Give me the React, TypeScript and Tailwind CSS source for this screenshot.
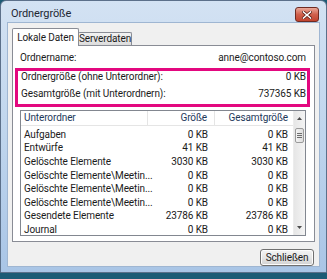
import React from 'react';

const rows = [
  { name: 'Aufgaben', size: '0 KB', total: '0 KB' },
  { name: 'Entwürfe', size: '41 KB', total: '41 KB' },
  { name: 'Gelöschte Elemente', size: '3030 KB', total: '3030 KB' },
  { name: 'Gelöschte Elemente\\Meetin...', size: '0 KB', total: '0 KB' },
  { name: 'Gelöschte Elemente\\Meetin...', size: '0 KB', total: '0 KB' },
  { name: 'Gelöschte Elemente\\Meetin...', size: '0 KB', total: '0 KB' },
  { name: 'Gesendete Elemente', size: '23786 KB', total: '23786 KB' },
  { name: 'Journal', size: '0 KB', total: '0 KB' },
];

const CloseButton = () => (
  <div className="mt-[6px] mr-[1px] w-[24px] h-[15px] rounded-[3px] border border-[#6e2b22] bg-gradient-to-b from-[#e9a899] via-[#d0604c] to-[#c2432e] flex items-center justify-center">
    <svg width="10" height="8" viewBox="0 0 10 8">
      <path d="M1.5 1 L8.5 7 M8.5 1 L1.5 7" stroke="#5a1d14" strokeWidth="3" strokeLinecap="square" />
      <path d="M1.5 1 L8.5 7 M8.5 1 L1.5 7" stroke="#ffffff" strokeWidth="1.6" strokeLinecap="square" />
    </svg>
  </div>
);

const Scrollbar = () => (
  <div className="w-[12px] flex flex-col bg-gradient-to-r from-[#e6e6e6] to-[#f4f4f4] border-l border-[#ececec]">
    <div className="h-[15px] flex items-center justify-center">
      <svg width="5" height="3" viewBox="0 0 5 3"><path d="M0 3 L2.5 0 L5 3 Z" fill="#4d4d4d" /></svg>
    </div>
    <div className="mt-[2px] mx-[1px] h-[15px] rounded-[2px] border border-[#9a9a9a] bg-gradient-to-r from-[#f3f3f3] to-[#dedede] flex flex-col items-center justify-center gap-[1px]">
      <div className="w-[5px] h-[1px] bg-[#6d6d6d]" />
      <div className="w-[5px] h-[1px] bg-[#6d6d6d]" />
      <div className="w-[5px] h-[1px] bg-[#6d6d6d]" />
    </div>
    <div className="flex-1" />
    <div className="h-[15px] flex items-center justify-center">
      <svg width="5" height="3" viewBox="0 0 5 3"><path d="M0 0 L5 0 L2.5 3 Z" fill="#4d4d4d" /></svg>
    </div>
  </div>
);

export default function App() {
  return (
    <div className="w-[327px] h-[279px] overflow-hidden bg-[#1c5b75] font-['Roboto',sans-serif] text-[10px] tracking-[-0.1px] text-[#1b1b1b]">
      <div className="h-[273px] flex flex-col border border-[#5c708a] rounded-t-[6px] bg-gradient-to-b from-[#d3e2f3] via-[#bfd5ed] to-[#a9c5e6] px-[6px] pb-[5px]">
        {/* title bar */}
        <div className="h-[21px] shrink-0 flex items-start justify-between">
          <span className="mt-[5px] ml-[4px] text-[11px] leading-[15px] text-[#1e2733]">Ordnergröße</span>
          <CloseButton />
        </div>

        {/* client area */}
        <div className="h-[245px] flex flex-col bg-[#f0f0f0] border border-[#9fb6d2] pt-[5px] px-[4px]">
          {/* tabs */}
          <div className="relative z-10 h-[17px] flex items-start">
            <div className="h-[18px] w-[67px] bg-white border border-b-0 border-[#898c95] rounded-t-[2px] flex items-center justify-center leading-[14px] whitespace-nowrap">
              Lokale Daten
            </div>
            <div className="mt-[4px] h-[13px] w-[54px] -ml-[1px] bg-gradient-to-b from-[#f3f3f3] to-[#dcdcdc] border border-b-0 border-[#898c95] rounded-t-[2px] flex items-center justify-center leading-[12px] whitespace-nowrap">
              Serverdaten
            </div>
          </div>

          {/* panel */}
          <div className="h-[197px] bg-white border border-[#898c95] flex flex-col">
            <div className="mt-[5px] h-[14px] flex items-center justify-between pl-[7px] pr-[8px] leading-[14px]">
              <span>Ordnername:</span>
              <span>anne@contoso.com</span>
            </div>

            <div className="mt-[3px] ml-[2px] mr-[4px] h-[39px] border-[3px] border-[#e3087f] flex flex-col pl-[3px] pr-[1px]">
              <div className="h-[12px] flex items-center justify-between leading-[12px]">
                <span>Ordnergröße (ohne Unterordner):</span>
                <span>0 KB</span>
              </div>
              <div className="mt-[5px] h-[12px] flex items-center justify-between leading-[12px]">
                <span>Gesamtgröße (mit Unterordnern):</span>
                <span>737365 KB</span>
              </div>
            </div>

            {/* folder list */}
            <div className="mt-[3px] ml-[7px] mr-[8px] h-[126px] border border-[#828790] flex overflow-hidden">
              <div className="flex-1 flex flex-col overflow-hidden">
                <div className="h-[15px] shrink-0 flex border-b border-[#e5e5e5] text-[#1e395b] leading-[14px]">
                  <div className="w-[127px] pl-[3px] flex items-center border-r border-[#e5e5e5]">Unterordner</div>
                  <div className="w-[67px] pr-[7px] flex items-center justify-end border-r border-[#e5e5e5]">Größe</div>
                  <div className="flex-1 pr-[5px] flex items-center justify-end">Gesamtgröße</div>
                </div>
                <div className="pt-[2px] flex flex-col">
                  {rows.map((r, i) => (
                    <div key={i} className="h-[13.6px] shrink-0 flex items-center leading-[12px]">
                      <div className="w-[127px] pl-[3px] whitespace-nowrap">{r.name}</div>
                      <div className="w-[67px] pr-[7px] text-right">{r.size}</div>
                      <div className="flex-1 pr-[5px] text-right">{r.total}</div>
                    </div>
                  ))}
                </div>
              </div>
              <Scrollbar />
            </div>
          </div>

          {/* buttons */}
          <div className="mt-[7px] flex justify-end pr-[1px]">
            <button className="w-[54px] h-[17px] rounded-[3px] border border-[#707070] bg-gradient-to-b from-[#f4f4f4] via-[#e6e6e6] to-[#d2d2d2] leading-[14px] text-[#1b1b1b] shadow-[inset_0_0_0_1px_#fcfcfc]">
              Schließen
            </button>
          </div>
        </div>
      </div>
    </div>
  );
}
